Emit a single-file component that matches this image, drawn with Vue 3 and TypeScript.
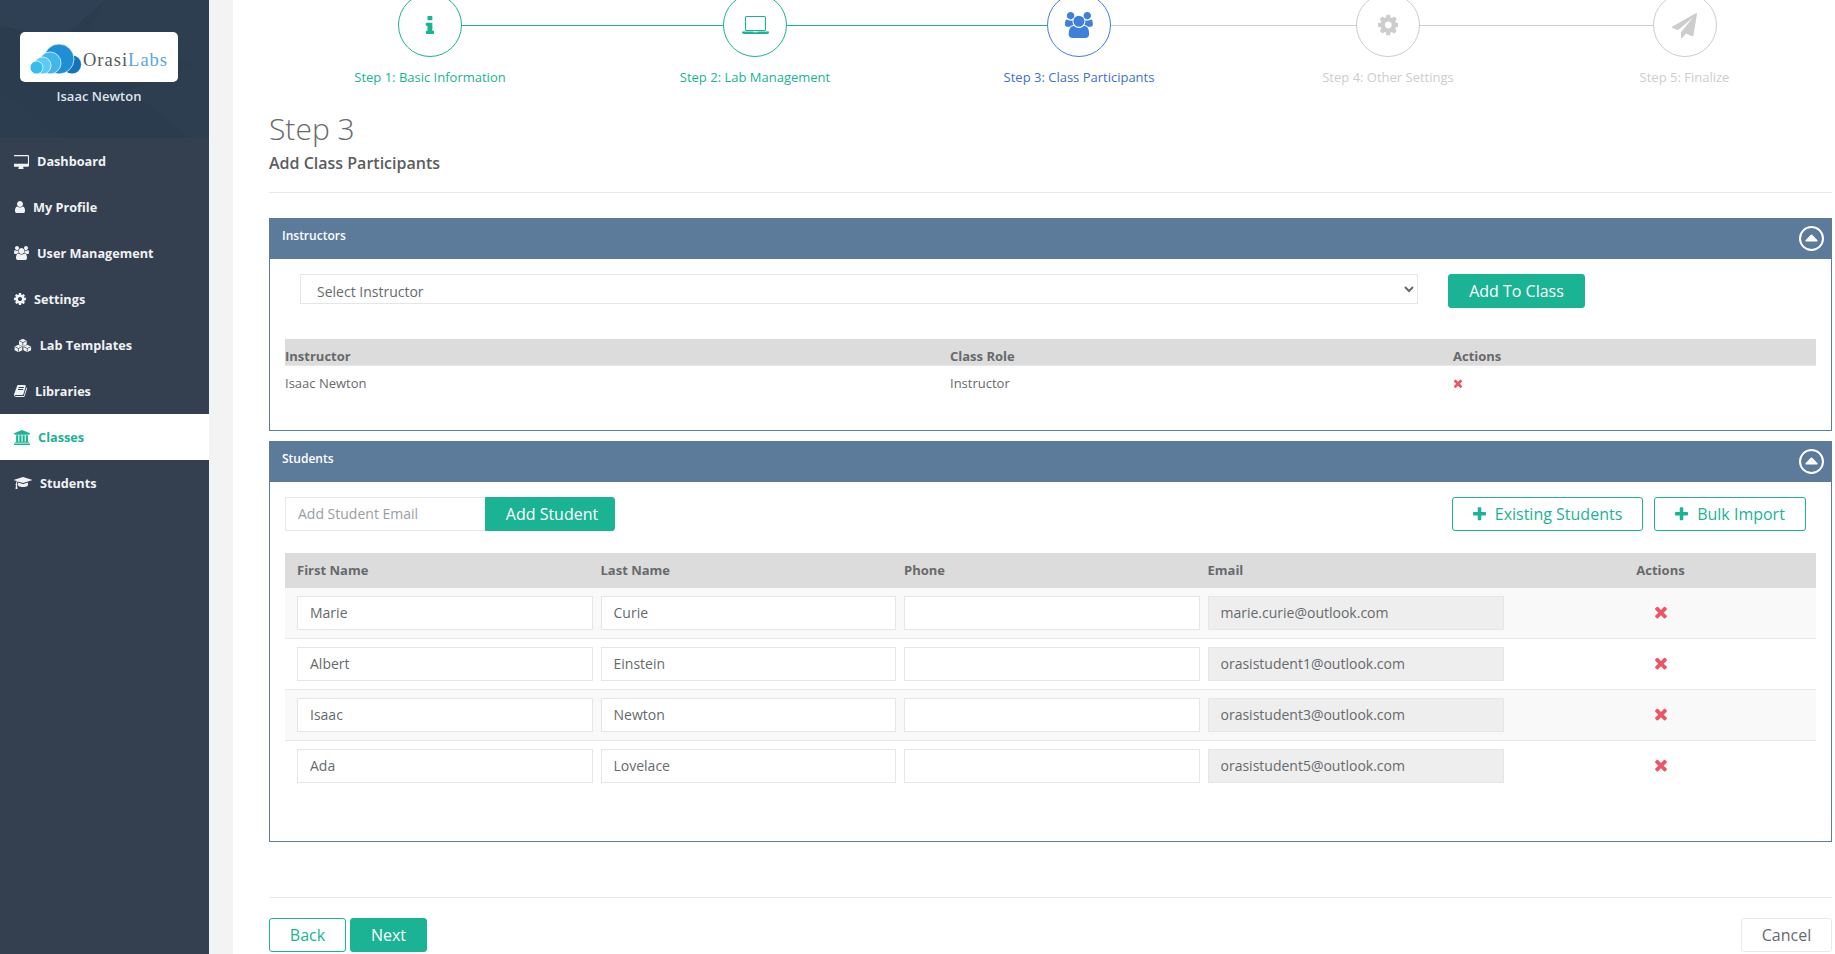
<script setup lang="ts">
interface Ico { w: number; h: number; d: string; line?: string }

const I: Record<string, Ico> = {
  desktop: { w: 1792, h: 1792, d: 'M1664 1120v-832q0-13-9.5-22.5t-22.5-9.5h-1600q-13 0-22.5 9.5t-9.5 22.5v832q0 13 9.5 22.5t22.5 9.5h1600q13 0 22.5-9.5t9.5-22.5zm128-832v1088q0 66-47 113t-113 47h-544q0 37 16 77.5t32 71 16 43.5q0 26-19 45t-45 19h-512q-26 0-45-19t-19-45q0-14 16-44t32-70 16-78h-544q-66 0-113-47t-47-113v-1088q0-66 47-113t113-47h1632q66 0 113 47t47 113z' },
  user: { w: 1408, h: 1792, d: 'M1408 1399q0 109-62.5 187t-150.5 78h-854q-88 0-150.5-78t-62.5-187q0-85 8.5-160.5t31.5-152 58.5-131 94-89 134.5-34.5q131 128 313 128t313-128q76 0 134.5 34.5t94 89 58.5 131 31.5 152 8.5 160.5zm-256-887q0 159-112.5 271.5t-271.5 112.5-271.5-112.5-112.5-271.5 112.5-271.5 271.5-112.5 271.5 112.5 112.5 271.5z' },
  users: { w: 1920, h: 1792, d: 'M593 896q-162 5-265 128h-134q-82 0-138-40.5t-56-118.5q0-353 124-353 6 0 43.5 21t97.5 42.5 119 21.5q67 0 133-23-5 37-5 66 0 139 81 256zm1071 637q0 120-73 189.5t-194 69.5h-874q-121 0-194-69.5t-73-189.5q0-53 3.5-103.5t14-109 26.5-108.5 43-97.5 62-81 85.5-53.5 111.5-20q10 0 43 21.5t73 48 107 48 135 21.5 135-21.5 107-48 73-48 43-21.5q61 0 111.5 20t85.5 53.5 62 81 43 97.5 26.5 108.5 14 109 3.5 103.5zm-1024-1277q0 106-75 181t-181 75-181-75-75-181 75-181 181-75 181 75 75 181zm704 384q0 159-112.5 271.5t-271.5 112.5-271.5-112.5-112.5-271.5 112.5-271.5 271.5-112.5 271.5 112.5 112.5 271.5zm576 225q0 78-56 118.5t-138 40.5h-134q-103-123-265-128 81-117 81-256 0-29-5-66 66 23 133 23 59 0 119-21.5t97.5-42.5 43.5-21q124 0 124 353zm-128-609q0 106-75 181t-181 75-181-75-75-181 75-181 181-75 181 75 75 181z' },
  cog: { w: 1536, h: 1792, d: 'M1024 896q0-106-75-181t-181-75-181 75-75 181 75 181 181 75 181-75 75-181zm512-109v222q0 12-8 23t-20 13l-185 28q-19 54-39 91 35 50 107 138 10 12 10 25t-9 23q-27 37-99 108t-94 71q-12 0-26-9l-138-108q-44 23-91 38-16 136-29 186-7 28-36 28h-222q-14 0-24.5-8.5t-11.5-21.5l-28-184q-49-16-90-37l-141 107q-10 9-25 9-14 0-25-11-126-114-165-168-7-10-7-23 0-12 8-23 15-21 51-66.5t54-70.5q-27-50-41-99l-183-27q-13-2-21-12.5t-8-23.5v-222q0-12 8-23t19-13l186-28q14-46 39-92-40-57-107-138-10-12-10-24 0-10 9-23 26-36 98.5-107.5t94.5-71.5q13 0 26 10l138 107q44-23 91-38 16-136 29-186 7-28 36-28h222q14 0 24.5 8.5t11.5 21.5l28 184q49 16 90 37l142-107q9-9 24-9 13 0 25 10 129 119 165 170 7 8 7 22 0 12-8 23-15 21-51 66.5t-54 70.5q26 50 41 98l183 28q13 2 21 12.5t8 23.5z' },
  cubes: { w: 24, h: 19, d: 'M12 1l5.2 2.6v5.2L12 11.4 6.8 8.8V3.6zM6 9l5.2 2.6v5L6 19.2.8 16.6v-5zM18 9l5.2 2.6v5L18 19.2l-5.2-2.6v-5z', line: 'M7.5 4 12 6.2 16.5 4M12 6.2V10.5M1.5 12 6 14.2 10.5 12M6 14.2V18.5M13.5 12 18 14.2 22.5 12M18 14.2V18.5' },
  book: { w: 1664, h: 1792, d: 'M1639 478q40 57 18 129l-275 906q-19 64-76.5 107.5t-122.5 43.5h-923q-77 0-148.5-53.5t-99.5-131.5q-24-67-2-127 0-4 3-27t4-37q1-8-3-21.5t-3-19.5q2-11 8-21t16.5-23.5 16.5-23.5q23-38 45-91.5t30-91.5q3-10 .5-30t-.5-28q3-11 17-28t17-23q21-36 42-92t25-90q1-9-2.5-32t.5-28q4-13 22-30.5t22-22.5q19-26 42.5-84.5t27.5-96.5q1-8-3-25.5t-2-26.5q2-8 9-18t18-23 17-21q8-12 16.5-30.5t15-35 16-36 19.5-32 26.5-23.5 36-11.5 47.5 5.5l-1 3q38-9 51-9h761q74 0 114 56t18 130l-274 906q-36 119-71.5 153.5t-128.5 34.5h-869q-27 0-38 15-11 16-1 43 24 70 144 70h923q29 0 56-15.5t35-41.5l300-987q7-22 5-57 38 15 59 43zm-1064 2q-4 13 2 22.5t20 9.5h608q13 0 25.5-9.5t16.5-22.5l21-64q4-13-2-22.5t-20-9.5h-608q-13 0-25.5 9.5t-16.5 22.5zm-83 256q-4 13 2 22.5t20 9.5h608q13 0 25.5-9.5t16.5-22.5l21-64q4-13-2-22.5t-20-9.5h-608q-13 0-25.5 9.5t-16.5 22.5z' },
  bank: { w: 1920, h: 1792, d: 'M960 0l960 384v128h-128q0 26-20.5 45t-48.5 19h-1526q-28 0-48.5-19t-20.5-45h-128v-128zm-704 640h256v768h128v-768h256v768h128v-768h256v768h128v-768h256v768h59q28 0 48.5 19t20.5 45v64h-1664v-64q0-26 20.5-45t48.5-19h59v-768zm1595 960q28 0 48.5 19t20.5 45v128h-1920v-128q0-26 20.5-45t48.5-19h1782z' },
  cap: { w: 2304, h: 1792, d: 'M1774 836l18 316q4 69-82 128t-235 93.5-323 34.5-323-34.5-235-93.5-82-128l18-316 574 181q22 7 48 7t48-7zm530-324q0 23-22 31l-1120 352q-4 1-10 1t-10-1l-652-206q-43 34-71 111.5t-34 178.5q63 36 63 109 0 69-58 107l58 433q2 14-8 25-9 11-24 11h-192q-15 0-24-11-10-11-8-25l58-433q-58-38-58-107 0-73 65-111 11-207 98-330l-333-104q-22-8-22-31t22-31l1120-352q4-1 10-1t10 1l1120 352q22 8 22 31z' },
  info: { w: 768, h: 1792, d: 'M704 1376v128q0 26-19 45t-45 19h-512q-26 0-45-19t-19-45v-128q0-26 19-45t45-19h64v-384h-64q-26 0-45-19t-19-45v-128q0-26 19-45t45-19h384q26 0 45 19t19 45v576h64q26 0 45 19t19 45zm-128-1152v192q0 26-19 45t-45 19h-256q-26 0-45-19t-19-45v-192q0-26 19-45t45-19h256q26 0 45 19t19 45z' },
  laptop: { w: 27, h: 18, d: 'M4.5 0h18q1.5 0 1.5 1.5v12q0 1.5-1.5 1.5h-18Q3 15 3 13.5v-12Q3 0 4.5 0zM4.1 1.1v12.8h18.8V1.1zM0 15.6h11.5v.7h4v-.7H27v1q0 1.4-2 1.4H2q-2 0-2-1.4z' },
  plane: { w: 1792, h: 1792, d: 'M1764 11q33 24 27 64l-256 1536q-5 29-32 45-14 8-31 8-11 0-24-5l-453-185-242 295q-18 23-49 23-13 0-22-4-19-7-30.5-23.5t-11.5-36.5v-349l864-1059-1069 925-395-162q-37-14-40-55-2-40 32-59l1664-960q15-9 32-9 20 0 36 11z' },
  times: { w: 1408, h: 1792, d: 'M1298 1322q0 40-28 68l-136 136q-28 28-68 28t-68-28l-294-294-294 294q-28 28-68 28t-68-28l-136-136q-28-28-28-68t28-68l294-294-294-294q-28-28-28-68t28-68l136-136q28-28 68-28t68 28l294 294 294-294q28-28 68-28t68 28l136 136q28 28 28 68t-28 68l-294 294 294 294q28 28 28 68z' },
  plus: { w: 1408, h: 1792, d: 'M1408 736v192q0 40-28 68t-68 28h-416v416q0 40-28 68t-68 28h-192q-40 0-68-28t-28-68v-416h-416q-40 0-68-28t-28-68v-192q0-40 28-68t68-28h416v-416q0-40 28-68t68-28h192q40 0 68 28t28 68v416h416q40 0 68 28t28 68z' },
}

const menu = [
  { label: 'Dashboard', icon: I.desktop, size: 15 },
  { label: 'My Profile', icon: I.user, size: 14 },
  { label: 'User Management', icon: I.users, size: 14 },
  { label: 'Settings', icon: I.cog, size: 14 },
  { label: 'Lab Templates', icon: I.cubes, size: 14 },
  { label: 'Libraries', icon: I.book, size: 14 },
  { label: 'Classes', icon: I.bank, active: true, size: 15 },
  { label: 'Students', icon: I.cap, size: 14 },
]

const steps = [
  { label: 'Step 1: Basic Information', icon: I.info, size: 23, state: 'done', left: 'none', right: 'done' },
  { label: 'Step 2: Lab Management', icon: I.laptop, size: 18, state: 'done', left: 'done', right: 'done' },
  { label: 'Step 3: Class Participants', icon: I.users, size: 26, state: 'current', left: 'done', right: 'todo' },
  { label: 'Step 4: Other Settings', icon: I.cog, size: 24, state: 'todo', left: 'todo', right: 'todo' },
  { label: 'Step 5: Finalize', icon: I.plane, size: 25, state: 'todo', left: 'todo', right: 'none' },
]

const students = [
  { first: 'Marie', last: 'Curie', email: 'marie.curie@outlook.com' },
  { first: 'Albert', last: 'Einstein', email: 'orasistudent1@outlook.com' },
  { first: 'Isaac', last: 'Newton', email: 'orasistudent3@outlook.com' },
  { first: 'Ada', last: 'Lovelace', email: 'orasistudent5@outlook.com' },
]

const iconWidth = (ic: Ico, size: number): number => (size * ic.w) / ic.h
</script>

<template>
  <div class="app">
    <aside class="side">
      <div class="profile">
        <svg class="facets" viewBox="0 0 209 138" width="209" height="138" aria-hidden="true">
          <polygon points="0,0 105,0 60,40 0,25" fill="#33455a" />
          <polygon points="105,0 209,0 209,70 90,30" fill="#2f4154" />
          <polygon points="130,90 209,60 209,138 190,138" fill="#2e4052" />
          <polygon points="0,90 60,138 0,138" fill="#2d3e50" />
        </svg>
        <div class="logo">
          <svg width="52" height="32" viewBox="0 0 52 32" aria-hidden="true">
            <defs>
              <clipPath id="cc"><rect x="0" y="0" width="52" height="30" /></clipPath>
            </defs>
            <g clip-path="url(#cc)" stroke="#ffffff" stroke-width=".7">
              <circle cx="42" cy="20.5" r="9.5" fill="#1174bd" />
              <circle cx="29" cy="15" r="15" fill="#1e8fd4" />
              <circle cx="20" cy="19" r="11" fill="#44b5ea" />
              <circle cx="12.5" cy="21.5" r="8.5" fill="#5ec9f2" />
              <circle cx="6.5" cy="23.5" r="6.5" fill="#35bdee" />
            </g>
          </svg>
          <span class="logo-text"><span class="orasi">Orasi</span><span class="labs">Labs</span></span>
        </div>
        <div class="who">Isaac Newton</div>
      </div>
      <nav>
        <a v-for="m in menu" :key="m.label" class="item" :class="{ active: m.active }">
          <svg class="mi" :width="iconWidth(m.icon, m.size)" :height="m.size" :viewBox="`0 0 ${m.icon.w} ${m.icon.h}`" aria-hidden="true">
            <path :d="m.icon.d" fill="currentColor" />
            <path v-if="m.icon.line" :d="m.icon.line" fill="none" stroke="#344050" stroke-width="1" />
          </svg>
          <span>{{ m.label }}</span>
        </a>
      </nav>
    </aside>

    <main class="main">
      <div class="stepper">
        <div v-for="s in steps" :key="s.label" class="step" :class="s.state">
          <div class="track">
            <span class="seg" :class="s.left"></span>
            <span class="circle">
              <svg :width="iconWidth(s.icon, s.size)" :height="s.size" :viewBox="`0 0 ${s.icon.w} ${s.icon.h}`" aria-hidden="true">
                <path :d="s.icon.d" fill="currentColor" fill-rule="evenodd" />
              </svg>
            </span>
            <span class="seg" :class="s.right"></span>
          </div>
          <div class="step-label">{{ s.label }}</div>
        </div>
      </div>

      <h2 class="title">Step 3</h2>
      <h3 class="sub">Add Class Participants</h3>
      <hr class="rule" />

      <section class="panel instr">
        <header class="panel-head">
          <span>Instructors</span>
          <svg width="25" height="25" viewBox="0 0 25 25" aria-hidden="true">
            <circle cx="12.5" cy="12.5" r="11.5" fill="none" stroke="#fff" stroke-width="2" />
            <path d="M12.5 8.5q.6 0 1 .5l5 5.2q.6 1.2-.6 1.3H7.1q-1.2-.1-.6-1.3l5-5.2q.4-.5 1-.5z" fill="#fff" />
          </svg>
        </header>
        <div class="panel-body">
          <div class="pick">
            <select class="select">
              <option>Select Instructor</option>
            </select>
            <button class="btn primary add-class">Add To Class</button>
          </div>
          <div class="t1 t1-head">
            <span>Instructor</span><span>Class Role</span><span>Actions</span>
          </div>
          <div class="t1 t1-row">
            <span>Isaac Newton</span><span>Instructor</span>
            <span class="x-cell">
              <svg width="10" height="12.7" viewBox="0 0 1408 1792" aria-hidden="true"><path :d="I.times.d" fill="#ed5565" /></svg>
            </span>
          </div>
        </div>
      </section>

      <section class="panel stud">
        <header class="panel-head">
          <span>Students</span>
          <svg width="25" height="25" viewBox="0 0 25 25" aria-hidden="true">
            <circle cx="12.5" cy="12.5" r="11.5" fill="none" stroke="#fff" stroke-width="2" />
            <path d="M12.5 8.5q.6 0 1 .5l5 5.2q.6 1.2-.6 1.3H7.1q-1.2-.1-.6-1.3l5-5.2q.4-.5 1-.5z" fill="#fff" />
          </svg>
        </header>
        <div class="panel-body">
          <div class="tools">
            <div class="group">
              <input class="email-add" placeholder="Add Student Email" />
              <button class="btn primary add-student">Add Student</button>
            </div>
            <div class="right">
              <button class="btn outline existing">
                <svg width="13" height="16.5" viewBox="0 0 1408 1792" aria-hidden="true"><path :d="I.plus.d" fill="currentColor" /></svg>
                Existing Students
              </button>
              <button class="btn outline bulk">
                <svg width="13" height="16.5" viewBox="0 0 1408 1792" aria-hidden="true"><path :d="I.plus.d" fill="currentColor" /></svg>
                Bulk Import
              </button>
            </div>
          </div>
          <div class="t2 t2-head">
            <span>First Name</span><span>Last Name</span><span>Phone</span><span>Email</span><span class="act">Actions</span>
          </div>
          <div v-for="s in students" :key="s.email" class="t2 t2-row">
            <input class="field" :value="s.first" />
            <input class="field" :value="s.last" />
            <input class="field" value="" />
            <input class="field ro" :value="s.email" readonly />
            <span class="act">
              <svg width="14" height="18" viewBox="0 0 1408 1792" aria-hidden="true"><path :d="I.times.d" fill="#ed5565" /></svg>
            </span>
          </div>
        </div>
      </section>

      <hr class="rule foot-rule" />
      <div class="foot">
        <div class="foot-left">
          <button class="btn outline wide">Back</button>
          <button class="btn primary wide">Next</button>
        </div>
        <button class="btn plain cancel">Cancel</button>
      </div>
    </main>
  </div>
</template>

<style>
html, body { margin: 0; height: 100%; overflow: hidden; background: #f3f3f4; }
</style>

<style scoped>
* { box-sizing: border-box; }
.app {
  display: flex;
  width: 1835px;
  height: 954px;
  overflow: hidden;
  font-family: "Open Sans", sans-serif;
  color: #676a6c;
  font-size: 13px;
}
.side { width: 209px; flex: none; background: #344050; height: 100%; }
.profile {
  position: relative;
  height: 138px;
  background: #2b3c4e;
  padding: 32px 20px 0;
  overflow: hidden;
}
.facets { position: absolute; left: 0; top: 0; opacity: .55; }
.logo {
  position: relative;
  width: 158px;
  height: 50px;
  background: #fff;
  border-radius: 5px;
  display: flex;
  align-items: center;
  padding: 5px 0 0 10px;
}
.logo-text {
  font-family: "Liberation Serif", serif;
  font-size: 18.5px;
  margin: 2px 0 0 1px;
  letter-spacing: 1px;
}
.orasi { color: #555a5e; }
.labs { color: #5aa4dc; }
.who {
  position: relative;
  width: 158px;
  margin-top: 5px;
  text-align: center;
  color: #dfe4ed;
  font-weight: 600;
  font-size: 13px;
  line-height: 18px;
}
.item {
  display: flex;
  align-items: center;
  height: 46px;
  padding-left: 14px;
  color: #f1f2f4;
  font-weight: 700;
  font-size: 12.7px;
  gap: 8px;
}
.item.active { background: #fff; color: #1ab394; }
.mi { flex: none; }

.main {
  margin-left: 24px;
  width: 1602px;
  height: 100%;
  background: #fff;
  padding: 0 3px 0 36px;
}
.stepper {
  display: grid;
  grid-template-columns: 322px 328px 320px 298px 295px;
  margin-top: -7px;
}
.step { display: flex; flex-direction: column; align-items: center; }
.track { display: flex; align-items: center; width: 100%; }
.seg { flex: 1; height: 1px; background: #ccc; }
.seg.none { background: transparent; }
.seg.done { background: #1ab394; }
.circle {
  width: 64px;
  height: 64px;
  border: 1px solid currentColor;
  border-radius: 50%;
  display: flex;
  align-items: center;
  justify-content: center;
  flex: none;
}
.step.done .circle { color: #1ab394; }
.step.current .circle { color: #3f80da; }
.step.todo .circle { color: #cdcdcd; }
.step-label { margin-top: 11px; font-size: 13px; line-height: 18px; }
.step.done .step-label { color: #1ab394; }
.step.current .step-label { color: #3f6fd0; }
.step.todo .step-label { color: #cdcdcd; }

.title {
  margin: 24px 0 0;
  font-weight: 300;
  font-size: 30px;
  line-height: 38px;
  color: #676a6c;
}
.sub {
  margin: 4px 0 0;
  font-weight: 600;
  font-size: 16px;
  line-height: 22px;
  color: #5a5d60;
}
.rule { border: 0; border-top: 1px solid #e9e9ea; margin: 18px 0 25px; }

.panel { border: 1px solid #5c7b9b; border-top: 0; }
.panel-head {
  height: 41px;
  margin: 0 -1px;
  background: #5c7b9b;
  color: #fff;
  font-weight: 600;
  font-size: 12px;
  display: flex;
  align-items: flex-start;
  justify-content: space-between;
  padding: 8px 8px 0 13px;
}
.panel-head span { line-height: 18px; margin-top: 1px; }
.instr { height: 213px; }
.stud { height: 401px; margin-top: 10px; }
.panel-body { padding: 15px 15px 0 15px; }
.pick { display: flex; align-items: flex-start; gap: 30px; padding-left: 15px; }
.select {
  width: 1118px;
  height: 30px;
  border: 1px solid #e5e6e7;
  background: #fff;
  font-family: inherit;
  font-size: 14px;
  color: #676a6c;
  padding: 4px 0 0 12px;
  border-radius: 0;
  outline: 0;
}
.btn {
  font-family: inherit;
  font-size: 16px;
  height: 34px;
  border-radius: 3px;
  border: 1px solid #1ab394;
  padding: 0;
  cursor: pointer;
  display: inline-flex;
  align-items: center;
  justify-content: center;
}
.primary { background: #1ab394; color: #fff; }
.outline { background: #fff; color: #1ab394; }
.plain { background: #fff; color: #676a6c; border-color: #e7eaec; }
.add-class { width: 137px; }

.t1 { display: grid; grid-template-columns: 665px 503px 1fr; }
.t1-head {
  margin-top: 31px;
  height: 27px;
  background: #dcdcdc;
  border-bottom: 1px solid #e7e7e7;
  font-weight: 700;
  line-height: 18px;
  align-items: end;
}
.t1-row { padding-top: 8px; line-height: 18px; font-size: 13px; }
.x-cell { display: flex; align-items: center; }

.tools { display: flex; justify-content: space-between; }
.group { display: flex; }
.email-add {
  width: 200px;
  height: 34px;
  border: 1px solid #e5e6e7;
  border-right: 0;
  padding: 0 12px 2px;
  font-family: inherit;
  font-size: 14px;
  outline: 0;
}
.email-add::placeholder { color: #9b9ea1; opacity: 1; }
.add-student { width: 130px; border-radius: 0 3px 3px 0; padding-left: 4px; }
.right { display: flex; gap: 11px; padding-right: 10px; }
.existing { width: 191px; gap: 9px; }
.bulk { width: 152px; gap: 9px; }

.t2 {
  display: grid;
  grid-template-columns: 295.5px 295.5px 295.5px 296.5px 1fr;
  column-gap: 8px;
  padding-left: 12px;
}
.t2-head {
  margin-top: 22px;
  height: 35px;
  background: #dcdcdc;
  font-weight: 700;
  font-size: 13px;
  align-items: center;
  padding-bottom: 2px;
}
.t2-row { height: 51px; align-items: start; padding-top: 8px; border-bottom: 1px solid #e7e7e7; }
.t2-row:nth-of-type(odd) { background: #f9f9f9; }
.t2-row:nth-of-type(even) { background: #fff; }
.t2-row:last-child { border-bottom: 0; }
.act { display: block; width: 297px; text-align: center; }
.t2-row .act { display: flex; height: 32px; align-items: center; justify-content: center; }
.field {
  width: 100%;
  height: 34px;
  border: 1px solid #e5e6e7;
  background: #fff;
  padding: 0 12px 2px;
  font-family: inherit;
  font-size: 14px;
  color: #676a6c;
  outline: 0;
}
.field.ro { background: #eee; }

.foot-rule { margin: 55px 0 20px; }
.foot { display: flex; justify-content: space-between; }
.foot-left { display: flex; gap: 4px; }
.wide { width: 77px; }
.cancel { width: 91px; }
</style>
